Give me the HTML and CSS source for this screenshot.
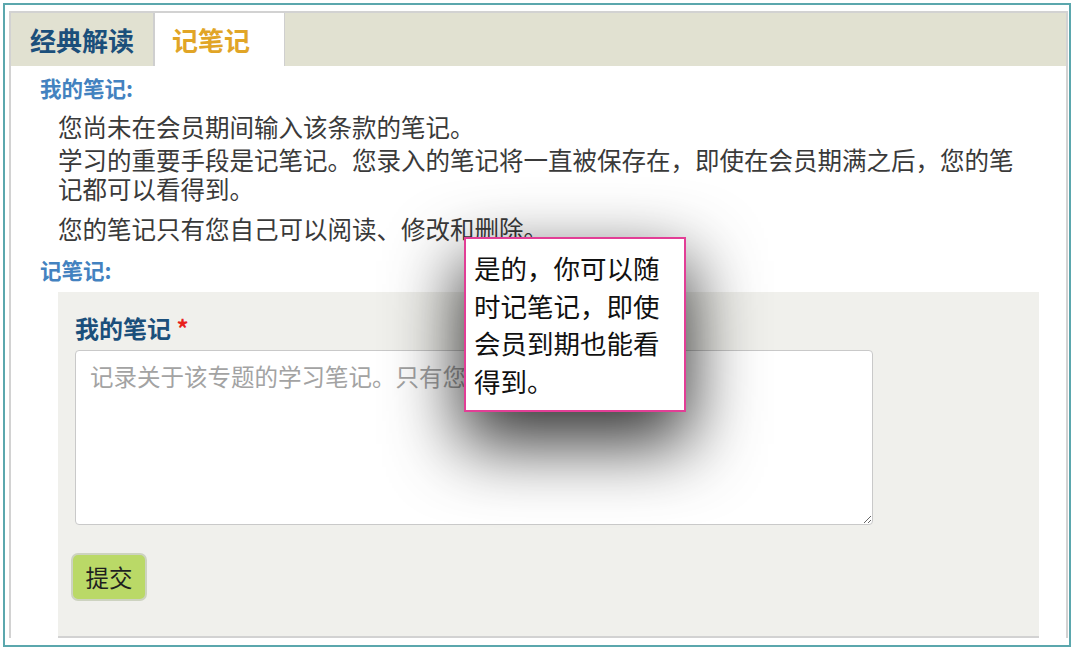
FILE: index.html
```html
<!DOCTYPE html>
<html lang="zh-CN">
<head>
    <meta charset="UTF-8">
    <meta name="viewport" content="width=device-width, initial-scale=1.0">
    <title>记笔记</title>
    <link rel="stylesheet" href="styles.css">
</head>
<body>
    <div class="frame">
        <div class="panel">
            <div class="tabs">
                <div class="tab tab-first">经典解读</div>
                <div class="tab tab-active">记笔记</div>
            </div>
            <div class="content">
                <h3 class="section-title">我的笔记:</h3>
                <p class="note-text note-first">您尚未在会员期间输入该条款的笔记。</p>
                <p class="note-text note-second">学习的重要手段是记笔记。您录入的笔记将一直被保存在，即使在会员期满之后，您的笔记都可以看得到。</p>
                <p class="note-text">您的笔记只有您自己可以阅读、修改和删除。</p>

                <h3 class="section-title section-form">记笔记:</h3>
                <form class="note-form">
                    <label class="form-label" for="note">我的笔记 <span class="required">*</span></label>
                    <textarea id="note" class="note-input" placeholder="记录关于该专题的学习笔记。只有您自己可以阅读。"></textarea>
                    <button type="button" class="submit-btn">提交</button>
                </form>
            </div>
        </div>
    </div>

    <div class="tooltip">是的，你可以随时记笔记，即使会员到期也能看得到。</div>
</body>
</html>
```

FILE: styles.css
```css
body {
    margin: 0;
    background-color: #fff;
    font-family: "Noto Sans CJK SC", "Noto Sans", sans-serif;
    color: #3a3a3a;
}
.frame {
    box-sizing: border-box;
    width: 1068px;
    height: 644px;
    margin: 3px;
    padding: 6px 1px 7px 4px;
    border: 2px solid #5ba7ad;
    overflow: hidden;
}
.panel {
    box-sizing: border-box;
    height: 627px;
    border: 2px solid #d2d2d2;
    border-bottom: none;
    overflow: hidden;
}
.tabs {
    display: flex;
    height: 53px;
    background-color: #e1e1d1;
}
.tab {
    font-size: 26px;
    font-weight: bold;
    line-height: 53px;
    color: #1b4f7b;
}
.tab-first {
    padding: 0 19px;
    border-right: 2px solid #cfcfcf;
}
.tab-active {
    padding: 0 34px 0 17px;
    background-color: #fff;
    color: #e1a526;
    border-right: 1px solid #cfcfcf;
}
.content {
    padding: 10px 27px 0 29px;
}
.section-title {
    margin: 0;
    font-size: 21.5px;
    line-height: 24px;
    color: #4382c0;
}
.section-form {
    margin-top: 15px;
}
.note-text {
    margin: 0 0 0 18px;
    padding-right: 20px;
    font-size: 24.5px;
    line-height: 29px;
}
.note-first {
    margin-top: 12px;
    margin-bottom: 4px;
}
.note-second {
    margin-bottom: 11px;
}
.note-form {
    display: flex;
    flex-direction: column;
    align-items: flex-start;
    height: 320px;
    margin: 10px 0 0 18px;
    padding: 24px 17px 0;
    background-color: #f0f0ec;
    border-bottom: 2px solid #d2d2d2;
}
.form-label {
    font-size: 24px;
    font-weight: bold;
    line-height: 24px;
    color: #1b4f7b;
}
.required {
    color: #e8201c;
}
.note-input {
    box-sizing: border-box;
    width: 798px;
    height: 175px;
    margin-top: 10px;
    padding: 11px 14px;
    border: 1px solid #c9c9c9;
    border-radius: 4px;
    background-color: #fff;
    font-family: inherit;
    font-size: 23.5px;
    line-height: 28px;
    color: #333;
}
.note-input::placeholder {
    color: #a3a3a3;
}
.submit-btn {
    box-sizing: border-box;
    width: 76px;
    height: 48px;
    margin: 28px 0 0 -4px;
    padding: 0;
    border: 2px solid #cdd3c0;
    border-radius: 7px;
    background-color: #bad967;
    font-family: inherit;
    font-size: 23.5px;
    color: #1f1f1f;
}
.tooltip {
    position: absolute;
    left: 464px;
    top: 237px;
    box-sizing: border-box;
    width: 222px;
    height: 175px;
    padding: 10px 12px 0 8px;
    border: 2px solid #e23e96;
    background-color: #fff;
    font-size: 26.5px;
    line-height: 37.7px;
    color: #111;
    box-shadow: 0 28px 70px 4px rgba(0, 0, 0, 0.8);
}
```
